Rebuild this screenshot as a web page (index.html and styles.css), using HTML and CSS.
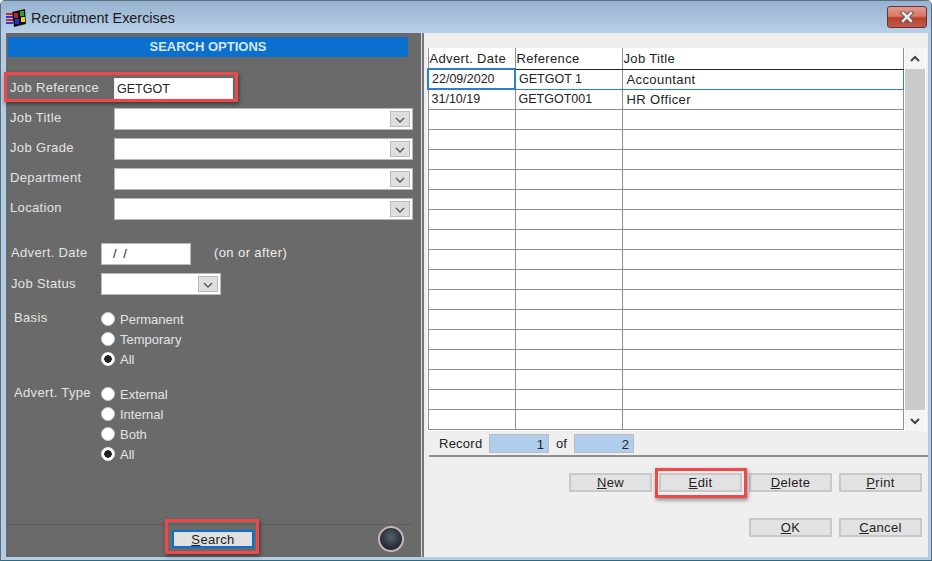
FILE: index.html
```html
<!DOCTYPE html>
<html lang="en">
<head>
  <meta charset="UTF-8">
  <title>Recruitment Exercises</title>
  <link rel="stylesheet" href="styles.css">
</head>
<body>
  <div class="window">
    <div class="titlebar">
      <svg class="app-icon" width="21" height="21" viewBox="0 0 21 21">
        <path d="M6 5 L19 2 L20 17 L8 20 Z" fill="#111"/>
        <rect x="0" y="6" width="7" height="2" fill="#d22"/>
        <rect x="0" y="9" width="7" height="2" fill="#33d"/>
        <rect x="0" y="12" width="7" height="2" fill="#d22"/>
        <rect x="0" y="15" width="7" height="2" fill="#33d"/>
        <rect x="8" y="6" width="4" height="5" fill="#b5232a"/>
        <rect x="14" y="4" width="4" height="5" fill="#22a33a"/>
        <rect x="9" y="12" width="4" height="5" fill="#2436c8"/>
        <rect x="15" y="10" width="4" height="5" fill="#e8d020"/>
      </svg>
      <span class="title">Recruitment Exercises</span>
      <div class="close-btn">
        <svg width="14" height="12" viewBox="0 0 14 12"><path d="M3 2 L11 10 M11 2 L3 10" stroke="#555" stroke-width="4.5" stroke-linecap="square"/><path d="M3 2 L11 10 M11 2 L3 10" stroke="#ece8e8" stroke-width="2.6" stroke-linecap="square"/></svg>
      </div>
    </div>

    <div class="client">
      <div class="search-panel">
        <div class="search-head">SEARCH OPTIONS</div>

        <div class="field-row row-ref">
          <label class="lbl lbl-wide">Job Reference</label>
          <div class="textbox textbox-ref">GETGOT</div>
        </div>
        <div class="field-row">
          <label class="lbl lbl-wide">Job Title</label>
          <div class="combo combo-wide"><span class="arrow"><svg width="12" height="7" viewBox="0 0 12 7"><path d="M2 1 L6 5 L10 1" fill="none" stroke="#555" stroke-width="1.3"/></svg></span></div>
        </div>
        <div class="field-row">
          <label class="lbl lbl-wide">Job Grade</label>
          <div class="combo combo-wide"><span class="arrow"><svg width="12" height="7" viewBox="0 0 12 7"><path d="M2 1 L6 5 L10 1" fill="none" stroke="#555" stroke-width="1.3"/></svg></span></div>
        </div>
        <div class="field-row">
          <label class="lbl lbl-wide">Department</label>
          <div class="combo combo-wide"><span class="arrow"><svg width="12" height="7" viewBox="0 0 12 7"><path d="M2 1 L6 5 L10 1" fill="none" stroke="#555" stroke-width="1.3"/></svg></span></div>
        </div>
        <div class="field-row">
          <label class="lbl lbl-wide">Location</label>
          <div class="combo combo-wide"><span class="arrow"><svg width="12" height="7" viewBox="0 0 12 7"><path d="M2 1 L6 5 L10 1" fill="none" stroke="#555" stroke-width="1.3"/></svg></span></div>
        </div>

        <div class="field-row row-date">
          <label class="lbl lbl-narrow">Advert. Date</label>
          <div class="textbox textbox-date">/ /</div>
          <span class="hint">(on or after)</span>
        </div>
        <div class="field-row row-status">
          <label class="lbl lbl-narrow">Job Status</label>
          <div class="combo combo-status"><span class="arrow"><svg width="12" height="7" viewBox="0 0 12 7"><path d="M2 1 L6 5 L10 1" fill="none" stroke="#555" stroke-width="1.3"/></svg></span></div>
        </div>

        <div class="radio-group group-basis">
          <span class="group-lbl">Basis</span>
          <div class="radios">
            <div class="radio-row"><span class="radio"></span>Permanent</div>
            <div class="radio-row"><span class="radio"></span>Temporary</div>
            <div class="radio-row"><span class="radio checked"></span>All</div>
          </div>
        </div>
        <div class="radio-group group-type">
          <span class="group-lbl">Advert. Type</span>
          <div class="radios">
            <div class="radio-row"><span class="radio"></span>External</div>
            <div class="radio-row"><span class="radio"></span>Internal</div>
            <div class="radio-row"><span class="radio"></span>Both</div>
            <div class="radio-row"><span class="radio checked"></span>All</div>
          </div>
        </div>

        <div class="search-foot">
          <button class="btn btn-search"><u>S</u>earch</button>
          <span class="knob"></span>
        </div>
        <div class="note note-ref"></div>
        <div class="note note-search"></div>
      </div>

      <div class="list-panel">
        <div class="grid-wrap">
          <table class="grid">
            <colgroup><col class="col-date"><col class="col-ref"><col></colgroup>
            <tr class="head"><th>Advert. Date</th><th>Reference</th><th>Job Title</th></tr>
            <tr class="current"><td class="cell-focus">22/09/2020</td><td>GETGOT 1</td><td class="pad">Accountant</td></tr>
            <tr><td>31/10/19</td><td>GETGOT001</td><td class="pad">HR Officer</td></tr>
            <tr><td></td><td></td><td></td></tr>
            <tr><td></td><td></td><td></td></tr>
            <tr><td></td><td></td><td></td></tr>
            <tr><td></td><td></td><td></td></tr>
            <tr><td></td><td></td><td></td></tr>
            <tr><td></td><td></td><td></td></tr>
            <tr><td></td><td></td><td></td></tr>
            <tr><td></td><td></td><td></td></tr>
            <tr><td></td><td></td><td></td></tr>
            <tr><td></td><td></td><td></td></tr>
            <tr><td></td><td></td><td></td></tr>
            <tr><td></td><td></td><td></td></tr>
            <tr><td></td><td></td><td></td></tr>
            <tr><td></td><td></td><td></td></tr>
            <tr><td></td><td></td><td></td></tr>
            <tr><td></td><td></td><td></td></tr>
          </table>
          <div class="scrollbar">
            <span class="scroll-btn"><svg width="12" height="8" viewBox="0 0 12 8"><path d="M2 6 L6 2 L10 6" fill="none" stroke="#444" stroke-width="2"/></svg></span>
            <span class="scroll-track"></span>
            <span class="scroll-btn"><svg width="12" height="8" viewBox="0 0 12 8"><path d="M2 2 L6 6 L10 2" fill="none" stroke="#444" stroke-width="2"/></svg></span>
          </div>
        </div>

        <div class="record-bar">
          <span class="rec-lbl">Record</span>
          <span class="rec-box">1</span>
          <span class="rec-of">of</span>
          <span class="rec-box">2</span>
        </div>

        <div class="btn-row row-one">
          <button class="btn"><u>N</u>ew</button>
          <button class="btn"><u>E</u>dit</button>
          <button class="btn"><u>D</u>elete</button>
          <button class="btn"><u>P</u>rint</button>
        </div>
        <div class="btn-row row-two">
          <button class="btn"><u>O</u>K</button>
          <button class="btn"><u>C</u>ancel</button>
        </div>
        <div class="note note-edit"></div>
      </div>
    </div>
  </div>
</body>
</html>
```

FILE: styles.css
```css
html, body {
  margin: 0;
  padding: 0;
  background: #fff;
}

body {
  width: 932px;
  height: 561px;
  overflow: hidden;
  font-family: "Liberation Sans", Arial, sans-serif;
  font-size: 13px;
  color: #222;
}

.window {
  position: relative;
  box-sizing: border-box;
  width: 932px;
  height: 561px;
  display: flex;
  flex-direction: column;
  background: #b4cde3;
  border: 1px solid #5d6f7c;
  border-bottom: 1px solid #2c6a80;
  border-radius: 5px 5px 0 0;
}

.titlebar {
  height: 32px;
  flex: none;
  display: flex;
  align-items: center;
  padding-left: 5px;
  padding-right: 4px;
  background: linear-gradient(#97b2cf, #b8d0e8);
}

.app-icon {
  margin-right: 4px;
}

.title {
  flex: 1;
  padding-top: 1px;
  font-size: 14.4px;
  color: #1a1a1a;
}

.close-btn {
  box-sizing: border-box;
  width: 40px;
  height: 22px;
  display: flex;
  align-items: center;
  justify-content: center;
  border: 1px solid #5f3440;
  border-radius: 3px;
  background: linear-gradient(#e59a8e 0%, #d9796a 45%, #b9402c 55%, #c8584a 100%);
}

.client {
  flex: 1;
  display: flex;
  margin: 0 3px 3px 5px;
  background: #efefef;
  min-height: 0;
}

/* left side */
.search-panel {
  position: relative;
  flex: none;
  box-sizing: border-box;
  width: 416px;
  padding: 4px 0 0 0;
  border-right: 1px solid #dcdcdc;
  background: #6a6a6a;
  color: #eee;
}

.search-head {
  width: 400px;
  height: 20px;
  margin-left: 2px;
  line-height: 20px;
  text-align: center;
  font-weight: bold;
  color: #d9e6f2;
  background: #0a70d0;
}

.field-row {
  display: flex;
  align-items: flex-start;
  height: 30px;
}

.row-ref {
  margin-top: 21px;
}

.row-date {
  margin-top: 15px;
}

.lbl {
  display: block;
  padding-top: 2px;
  color: #e4e4e4;
  letter-spacing: 0.35px;
}

.lbl-wide {
  width: 104px;
  margin-left: 4px;
}

.lbl-narrow {
  width: 90px;
  margin-left: 5px;
}

.row-status .lbl {
  padding-top: 3px;
}

.textbox,
.combo {
  box-sizing: border-box;
  background: #fff;
  border: 1px solid #b9b9b9;
  height: 22px;
  color: #222;
}

.textbox-ref {
  width: 119px;
  height: 21px;
  line-height: 20px;
  padding-left: 2px;
  font-size: 12.5px;
  border-color: #eee;
}

.textbox-date {
  width: 90px;
  line-height: 20px;
  padding-left: 11px;
  word-spacing: 3px;
}

.hint {
  margin-left: 23px;
  padding-top: 2px;
  letter-spacing: 0.4px;
}

.combo {
  display: flex;
  justify-content: flex-end;
  align-items: stretch;
  padding: 2px;
}

.combo-wide {
  width: 299px;
}

.combo-status {
  width: 120px;
}

.arrow {
  width: 20px;
  display: flex;
  align-items: flex-end;
  justify-content: center;
  padding-bottom: 2px;
  background: #dedede;
  border: 1px solid #bbb;
  box-sizing: border-box;
}

.radio-group {
  display: flex;
  align-items: flex-start;
}

.group-basis {
  margin-top: 6px;
}

.group-type {
  margin-top: 15px;
}

.group-lbl {
  width: 87px;
  margin-left: 8px;
  padding-top: 1px;
  color: #e4e4e4;
  letter-spacing: 0.35px;
}

.radio-row {
  display: flex;
  align-items: center;
  height: 20px;
  color: #e4e4e4;
}

.radio {
  box-sizing: border-box;
  width: 14px;
  height: 14px;
  margin-right: 5px;
  border-radius: 50%;
  background: #fff;
  border: 1px solid #ccc;
}

.radio.checked {
  border: 1px solid #eee;
  background: radial-gradient(circle, #222 0 3.5px, #fff 4px);
}

.search-foot {
  position: absolute;
  left: 0;
  right: 9px;
  top: 491px;
  height: 28px;
  display: flex;
  align-items: center;
  border-top: 1px solid #5e5e5e;
}

.btn {
  box-sizing: border-box;
  width: 83px;
  height: 19px;
  padding: 0;
  font-family: "Liberation Sans", Arial, sans-serif;
  font-size: 13px;
  line-height: 15px;
  letter-spacing: 0.35px;
  color: #222;
  background: #e2e2e2;
  border: 2px solid #c8c8c8;
  text-align: center;
}

.btn-search {
  margin-left: 166px;
  width: 82px;
  height: 18px;
  border-color: #0a70d0;
  background: #e0e0e0;
}

.knob {
  box-sizing: border-box;
  width: 26px;
  height: 26px;
  margin-left: 124px;
  border-radius: 50%;
  border: 2px solid #c9b2c0;
  background: radial-gradient(circle at 50% 40%, #56626f 0, #2b323b 55%, #15181d 100%);
}

/* right side */
.list-panel {
  position: relative;
  flex: 1;
  padding: 0 0 0 3px;
  border-left: 2px solid #777;
}

.grid-wrap {
  display: flex;
  margin-top: 15px;
  width: 499px;
  height: 383px;
  background: #fff;
}

.grid {
  flex: none;
  width: 477px;
  border-collapse: collapse;
  table-layout: fixed;
  align-self: flex-start;
  background: #fff;
}

.col-date {
  width: 87px;
}

.col-ref {
  width: 107px;
}

.grid th,
.grid td {
  height: 19px;
  padding: 0 0 0 3px;
  font-weight: normal;
  font-size: 12.5px;
  line-height: 15px;
  text-align: left;
  color: #222;
  border: 1px solid #8f8f8f;
  white-space: nowrap;
  overflow: hidden;
}

.grid .head th {
  height: 20px;
  border-top: none;
  border-bottom: 1px solid #222;
  padding-left: 1px;
  font-size: 13px;
  letter-spacing: 0.35px;
}

.grid .pad {
  padding-left: 4px;
  font-size: 13px;
  letter-spacing: 0.4px;
}

.grid .current td {
  height: 18px;
  border-top: 1px solid #222;
  border-bottom: 1px solid #2a7fd0;
}

.grid .current td:last-child {
  border-right: 1px solid #2a7fd0;
}

.grid .current .cell-focus {
  border: 2px solid #2a7fd0;
}

.scrollbar {
  width: 20px;
  margin-left: 1px;
  display: flex;
  flex-direction: column;
  background: #f4f4f4;
}

.scroll-btn {
  height: 21px;
  flex: none;
  display: flex;
  align-items: center;
  justify-content: center;
}

.scroll-track {
  flex: 1;
  background: #cbcbcb;
}

.record-bar {
  box-sizing: border-box;
  display: flex;
  align-items: center;
  width: 499px;
  height: 25px;
  margin-top: 1px;
  margin-left: 2px;
  padding-left: 10px;
  border-bottom: 2px solid #8f8f8f;
}

.rec-lbl {
  width: 50px;
  letter-spacing: 0.25px;
}

.rec-of {
  width: 25px;
  padding-left: 7px;
  box-sizing: border-box;
}

.rec-box {
  box-sizing: border-box;
  width: 60px;
  height: 19px;
  line-height: 19px;
  padding-right: 4px;
  text-align: right;
  background: #b0cdeb;
  border: 1px solid #bbb;
}

.btn-row {
  display: flex;
  justify-content: flex-end;
  gap: 7px;
  width: 495px;
}

.row-one {
  margin-top: 16px;
}

.row-two {
  margin-top: 26px;
}

/* red annotation boxes lying over the form */
.note {
  position: absolute;
  box-sizing: border-box;
  border: 3px solid #f04848;
  box-shadow: 1px 2px 4px rgba(0, 0, 0, 0.45);
}

.note-ref {
  left: -2px;
  top: 39px;
  width: 234px;
  height: 30px;
}

.note-search {
  left: 159px;
  top: 486px;
  width: 94px;
  height: 35px;
}

.note-edit {
  left: 231px;
  top: 435px;
  width: 92px;
  height: 30px;
}
```
